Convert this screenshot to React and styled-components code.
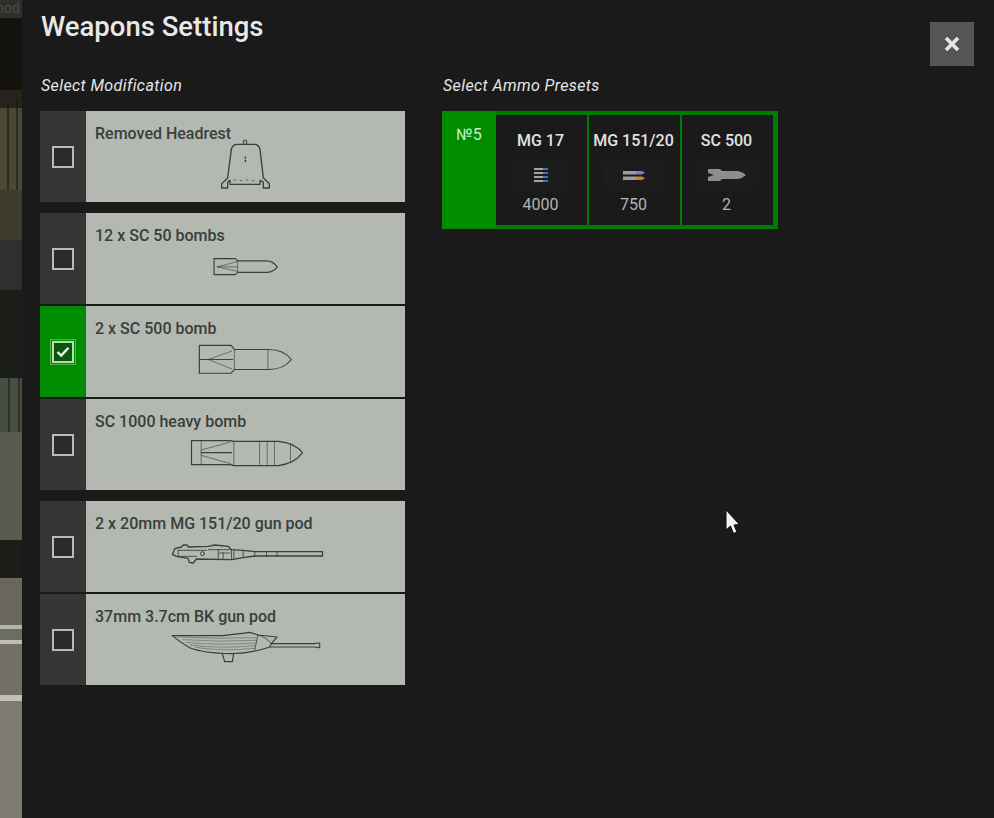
import React from "react";
import styled, { createGlobalStyle } from "styled-components";

const GlobalStyle = createGlobalStyle`
  html, body {
    margin: 0;
    padding: 0;
    height: 100%;
    background: #1a1a1a;
    overflow: hidden;
  }
  #root {
    height: 100%;
  }
`;

const Screen = styled.div`
  position: relative;
  display: flex;
  width: 994px;
  height: 818px;
  overflow: hidden;
  font-family: Roboto, "Liberation Sans", sans-serif;
`;

// the game scene peeking out to the left of the dialog
const SceneStrip = styled.div`
  width: 22px;
  flex: none;
  overflow: hidden;
  color: #4c4c48;
  font-size: 14px;
  line-height: 16px;
  white-space: nowrap;
  background:
    repeating-linear-gradient(90deg, transparent 0 7px, rgba(20, 20, 10, 0.5) 7px 9px) 0 100px / 22px 90px no-repeat,
    repeating-linear-gradient(90deg, transparent 0 8px, rgba(20, 20, 10, 0.5) 8px 10px) 0 378px / 22px 54px no-repeat,
    linear-gradient(
      180deg,
      #2f2f2d 0 18px,
      #14130e 18px 90px,
      #26231a 90px 108px,
      #4a4733 108px 190px,
      #3d3b2c 190px 240px,
      #2f2f2d 240px 290px,
      #1b1d19 290px 378px,
      #484d42 378px 432px,
      #5b5a4e 432px 540px,
      #1f1d18 540px 578px,
      #6a665c 578px 625px,
      #b4b4ac 625px 629px,
      #6c6c65 629px 640px,
      #bdbdb6 640px 644px,
      #746f65 644px 695px,
      #c0c0b8 695px 701px,
      #7f7a70 701px 818px
    );
`;

const SceneText = styled.div`
  margin-left: -4px;
`;

const Dialog = styled.div`
  flex: 1;
  display: flex;
  flex-direction: column;
  padding: 0 20px 0 18px;
  background: #1a1a1a;
`;

const Header = styled.div`
  display: flex;
  justify-content: space-between;
  align-items: flex-start;
  height: 66px;
`;

const Title = styled.h1`
  margin: 9px 0 0 1px;
  color: #e8e8e8;
  font-size: 27.5px;
  line-height: 36px;
  font-weight: 500;
`;

const CloseButton = styled.button`
  display: flex;
  align-items: center;
  justify-content: center;
  width: 44px;
  height: 44px;
  margin-top: 22px;
  padding: 0;
  border: 0;
  background: #555654;
`;

const Columns = styled.div`
  display: flex;
  gap: 37px;
  margin-top: 10px;
`;

const LeftColumn = styled.section`
  width: 365px;
`;

const RightColumn = styled.section`
  width: 336px;
`;

const SectionTitle = styled.h2`
  margin: 0 0 15px 1px;
  color: #e6e6e6;
  font-size: 16px;
  line-height: 20px;
  font-style: italic;
  font-weight: 400;
  letter-spacing: 0.4px;
`;

const GroupList = styled.div`
  display: flex;
  flex-direction: column;
  gap: 11px;
`;

const Group = styled.div`
  display: flex;
  flex-direction: column;
  gap: 2px;
`;

const Row = styled.div`
  display: flex;
  height: 91px;
`;

const CheckCell = styled.div`
  display: flex;
  align-items: center;
  justify-content: center;
  width: 46px;
  flex: none;
  background: ${(p) => (p.$on ? "#008c00" : "#363636")};
`;

const CheckBox = styled.div`
  display: flex;
  align-items: center;
  justify-content: center;
  box-sizing: border-box;
  width: 22px;
  height: 22px;
  border: 2px solid ${(p) => (p.$on ? "#b6dcb0" : "#b9bcb6")};
  background: ${(p) => (p.$on ? "#0b560b" : "#2b2b2b")};
  outline: ${(p) => (p.$on ? "1px solid #57b04f" : "none")};
  outline-offset: 1px;
`;

const RowBody = styled.div`
  flex: 1;
  padding: 14px 9px 0;
  background: #b3b8b1;
`;

const RowLabel = styled.div`
  color: #3a3e3b;
  font-size: 16px;
  line-height: 17px;
  font-weight: 500;
`;

const IconSlot = styled.div`
  display: flex;
  align-items: center;
  justify-content: center;
  height: 46px;
  margin-top: -1px;
  padding-left: ${(p) => p.$nudge || 0}px;
`;

const Drawing = styled.svg`
  flex: none;
  fill: none;
  stroke: #3a3f3b;
  stroke-linejoin: round;
  stroke-linecap: round;
  overflow: visible;
`;

const PresetCard = styled.div`
  display: flex;
  box-sizing: border-box;
  width: 336px;
  height: 118px;
  padding: 4px 5px 4px 0;
  background: #007d00;
`;

const PresetNumber = styled.div`
  width: 54px;
  flex: none;
  margin: -4px 0;
  padding-top: 14px;
  box-sizing: border-box;
  background: #008c00;
  color: #c8eec4;
  font-size: 16px;
  line-height: 20px;
  text-align: center;
`;

const AmmoCells = styled.div`
  flex: 1;
  display: grid;
  grid-template-columns: repeat(3, 1fr);
  gap: 2px;
`;

const AmmoCell = styled.div`
  display: flex;
  flex-direction: column;
  align-items: center;
  padding-right: 2px;
  background: #1a1a1a;
`;

const AmmoName = styled.div`
  margin-top: 16px;
  color: #e2e2e2;
  font-size: 16px;
  line-height: 20px;
  font-weight: 500;
  white-space: nowrap;
`;

const AmmoIcon = styled.div`
  display: flex;
  align-items: center;
  justify-content: center;
  width: 60px;
  height: 28px;
  margin-top: 10px;
  background: #1c1c1c;
`;

const AmmoCount = styled.div`
  margin-top: 6px;
  color: #b4b4b4;
  font-size: 16px;
  line-height: 20px;
`;

const Pointer = styled.svg`
  position: absolute;
  left: 723px;
  top: 508px;
`;

const HeadrestIcon = () => (
  <Drawing width="52" height="52" viewBox="180 28 156 156" strokeWidth="4">
    <path d="M185 178V165L203 148L214 62Q218 47 232 47H283Q296 47 300 62L310 148L328 165V178H310V160L300 155V167H210V155L203 160V178Z" />
    <path d="M251 46V35H260V46" strokeWidth="3" />
    <path d="M256 86V88M256 96V98" strokeWidth="5" />
    <path d="M222 154H228M240 156H246M258 154H264M276 156H282" strokeWidth="3" opacity="0.7" />
  </Drawing>
);

const SmallBombIcon = () => (
  <Drawing width="67" height="19" viewBox="636 768 200 58" strokeWidth="3.5">
    <path d="M640 773H705L712 780H800Q820 780 833 798Q820 815 800 815H712L705 822H640Z" />
    <path d="M650 798L712 782M650 798L712 812M650 798H712M712 780V815" strokeWidth="2.5" opacity="0.75" />
  </Drawing>
);

const MediumBombIcon = () => (
  <Drawing width="95" height="31" viewBox="594 131 284 92" strokeWidth="3.5">
    <path d="M598 135H693L703 147H805Q850 147 873 177Q850 207 805 207H703L693 218H598Z" />
    <path d="M598 177H698" />
    <path d="M625 177L695 152M625 177L695 205M703 147V207M803 147V207" strokeWidth="2.5" opacity="0.75" />
  </Drawing>
);

const HeavyBombIcon = () => (
  <Drawing width="114" height="29" viewBox="571 411 341 87" strokeWidth="3.5">
    <path d="M575 419H692L702 421H835Q885 425 908 455Q885 488 835 494H702L692 491H575Z" />
    <path d="M604 455H695" />
    <path d="M604 419V491M604 447L692 423M604 463L692 488M702 421V494M779 421V494M802 421V494M824 421V494M872 428V484" strokeWidth="2.5" opacity="0.75" />
  </Drawing>
);

const GunPodIcon = () => (
  <Drawing width="153" height="22" viewBox="34 38 458 66" strokeWidth="4">
    <path d="M38 72L45 55L65 50L70 44L82 44L85 50L145 48L165 44L205 48L215 58L250 60L285 64L488 64V77L285 77L250 82L215 88L110 86L100 98L88 96L85 84L50 78Z" />
    <path d="M55 60H140M55 60V78M55 78H110M145 58H178M178 58H210M178 68H210M215 58V88M222 58V88M250 60V82M285 64V77M320 64V77M352 64V77M175 58V86M190 68V86" strokeWidth="3" opacity="0.85" />
    <circle cx="128" cy="70" r="6" strokeWidth="3" />
  </Drawing>
);

const CannonPodIcon = () => (
  <Drawing width="152" height="32" viewBox="34 22 456 96" strokeWidth="3.5">
    <path d="M38 36L190 36Q240 30 270 26L295 34L352 40L335 60L330 70Q280 88 215 90Q130 88 90 72Q60 55 38 36Z" />
    <path d="M335 60H462L480 58V72L462 70H332" />
    <path d="M188 90L195 114L218 114L222 90" />
    <path d="M295 34L285 80M295 34Q320 40 335 60" strokeWidth="2.5" />
    <path d="M55 40Q170 46 290 42M68 48Q180 56 288 50M80 56Q180 66 287 58M92 64Q180 76 286 66M108 71Q190 84 285 74" strokeWidth="1.8" opacity="0.7" />
  </Drawing>
);

const CheckMark = () => (
  <svg width="14" height="12" viewBox="0 0 14 12" fill="none" stroke="#f2f7f0" strokeWidth="2.4">
    <path d="M1.5 6L5.2 9.6L12.5 1.8" />
  </svg>
);

const CloseIcon = () => (
  <svg width="16" height="16" viewBox="0 0 16 16" fill="none" stroke="#e6e6e4" strokeWidth="3.6">
    <path d="M2 2L14 14M14 2L2 14" />
  </svg>
);

const BeltIcon = () => (
  <svg width="16" height="15" viewBox="0 0 16 15">
    {[1, 5, 9, 13].map((y) => (
      <g key={y}>
        <rect x="1" y={y - 1} width="9" height="2" fill="#a5a5a5" />
        <rect x="10" y={y - 1} width="5" height="2" fill="#4b6ea8" />
      </g>
    ))}
  </svg>
);

const ShellIcon = () => (
  <svg width="24" height="11" viewBox="0 0 24 11">
    <rect x="1" y="1" width="13" height="3.5" fill="#9c9c9c" />
    <path d="M14 1H20L23 2.7L20 4.5H14Z" fill="#6f87bd" />
    <rect x="1" y="6.5" width="13" height="3.5" fill="#9c9c9c" />
    <path d="M14 6.5H20L23 8.2L20 10H14Z" fill="#c98232" />
  </svg>
);

const TinyBombIcon = () => (
  <svg width="38" height="12" viewBox="0 0 38 12">
    <path d="M0 0H12L14 2H30Q35 3 38 6Q35 9 30 10H14L12 12H0V8L6 6L0 4Z" fill="#8d8d8d" />
  </svg>
);

const mods = [
  [
    { id: "headrest", label: "Removed Headrest", icon: <HeadrestIcon /> },
  ],
  [
    { id: "sc50", label: "12 x SC 50 bombs", icon: <SmallBombIcon /> },
    { id: "sc500", label: "2 x SC 500 bomb", icon: <MediumBombIcon />, on: true },
    { id: "sc1000", label: "SC 1000 heavy bomb", icon: <HeavyBombIcon />, nudge: 2 },
  ],
  [
    { id: "mg151", label: "2 x 20mm MG 151/20 gun pod", icon: <GunPodIcon />, nudge: 3 },
    { id: "bk37", label: "37mm 3.7cm BK gun pod", icon: <CannonPodIcon />, nudge: 3 },
  ],
];

const ammo = [
  { name: "MG 17", icon: <BeltIcon />, count: 4000 },
  { name: "MG 151/20", icon: <ShellIcon />, count: 750 },
  { name: "SC 500", icon: <TinyBombIcon />, count: 2 },
];

export default function App() {
  return (
    <Screen>
      <GlobalStyle />
      <SceneStrip>
        <SceneText>nod</SceneText>
      </SceneStrip>
      <Dialog>
        <Header>
          <Title>Weapons Settings</Title>
          <CloseButton aria-label="Close">
            <CloseIcon />
          </CloseButton>
        </Header>
        <Columns>
          <LeftColumn>
            <SectionTitle>Select Modification</SectionTitle>
            <GroupList>
              {mods.map((group) => (
                <Group key={group[0].id}>
                  {group.map((mod) => (
                    <Row key={mod.id}>
                      <CheckCell $on={mod.on}>
                        <CheckBox $on={mod.on}>{mod.on && <CheckMark />}</CheckBox>
                      </CheckCell>
                      <RowBody>
                        <RowLabel>{mod.label}</RowLabel>
                        <IconSlot $nudge={mod.nudge}>{mod.icon}</IconSlot>
                      </RowBody>
                    </Row>
                  ))}
                </Group>
              ))}
            </GroupList>
          </LeftColumn>
          <RightColumn>
            <SectionTitle>Select Ammo Presets</SectionTitle>
            <PresetCard>
              <PresetNumber>№5</PresetNumber>
              <AmmoCells>
                {ammo.map((item) => (
                  <AmmoCell key={item.name}>
                    <AmmoName>{item.name}</AmmoName>
                    <AmmoIcon>{item.icon}</AmmoIcon>
                    <AmmoCount>{item.count}</AmmoCount>
                  </AmmoCell>
                ))}
              </AmmoCells>
            </PresetCard>
          </RightColumn>
        </Columns>
      </Dialog>
      <Pointer width="18" height="28" viewBox="0 0 18 28">
        <path d="M3 2L3 22L7.5 18L10.5 25.5L14 24L11 17L16.5 16.5Z" fill="#f4f4f4" stroke="#0c0c0c" strokeWidth="1" />
      </Pointer>
    </Screen>
  );
}
